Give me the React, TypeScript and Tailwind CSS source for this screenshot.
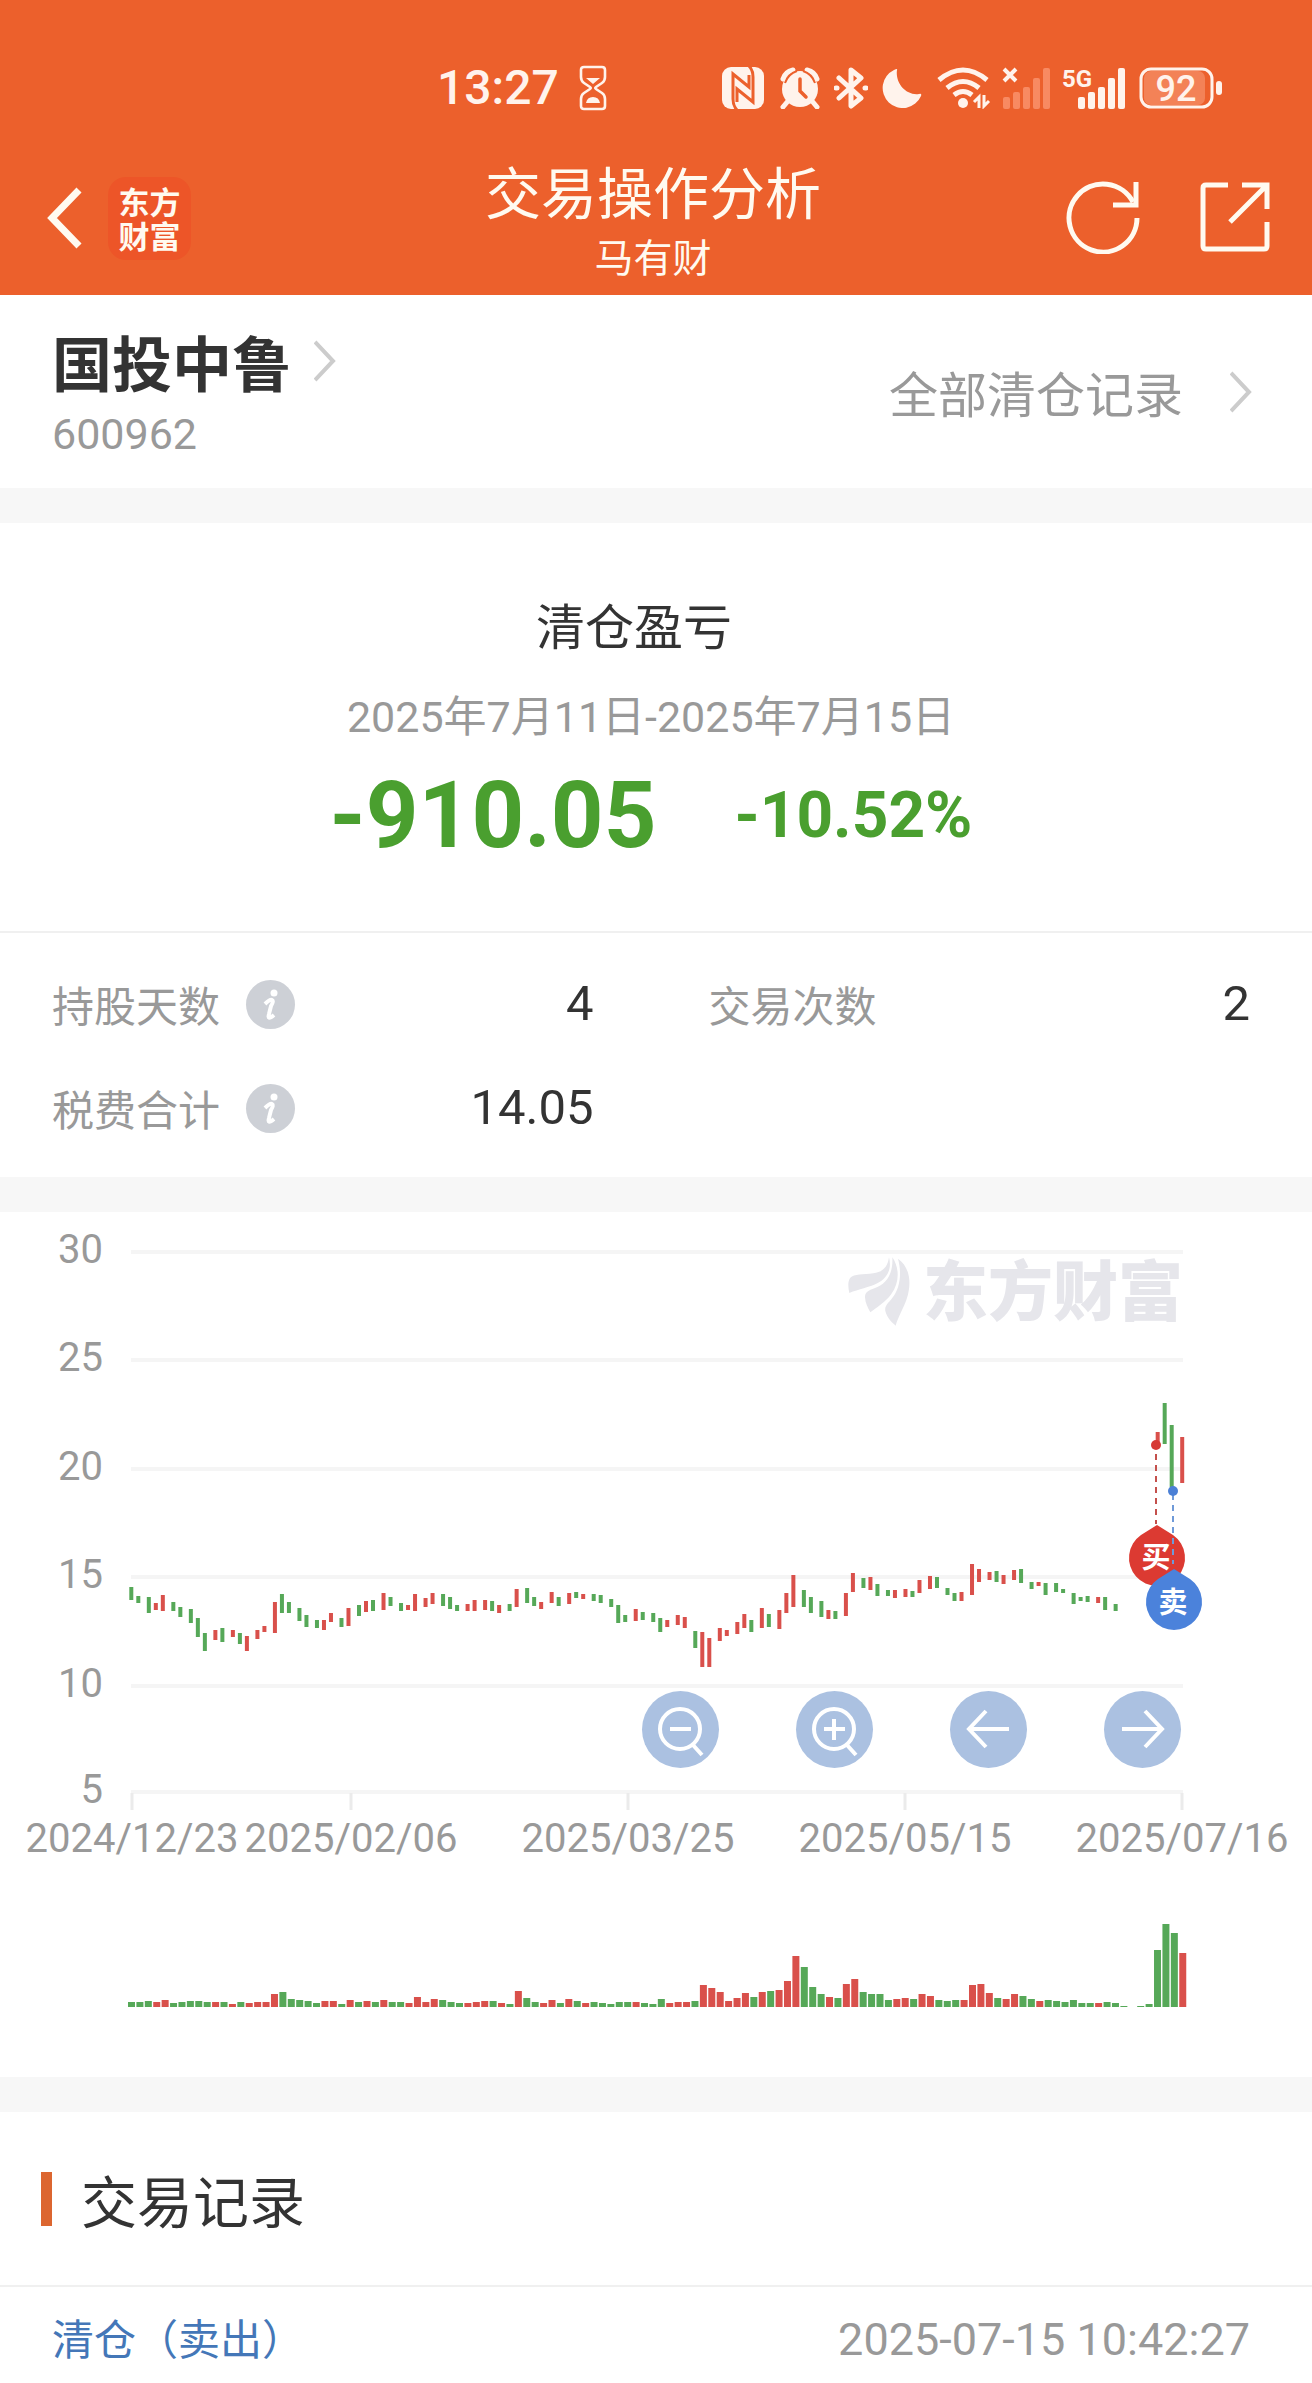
import type { ReactNode } from "react";

type Dir = "R" | "G";
type Candle = [Dir, number, number] | null;
type Volume = [Dir, number] | null;

const RED = "#d9504b";
const GREEN = "#56a858";

const GRID = [
  { label: "30", y: 40 },
  { label: "25", y: 148 },
  { label: "20", y: 257 },
  { label: "15", y: 365 },
  { label: "10", y: 474 },
  { label: "5", y: 580 },
];

const DATES = [
  { label: "2024/12/23", x: 132 },
  { label: "2025/02/06", x: 351 },
  { label: "2025/03/25", x: 628 },
  { label: "2025/05/15", x: 905 },
  { label: "2025/07/16", x: 1182 },
];

// direction, top, bottom
const CANDLES: Candle[] = [
  ["G", 375, 388], ["G", 384, 391], ["G", 385, 401], ["R", 391, 398], ["R", 383, 399],
  ["G", 390, 399], ["G", 395, 405], ["G", 397, 411], ["G", 406, 425], ["G", 421, 439],
  ["R", 418, 428], ["G", 416, 430], ["R", 418, 425], ["G", 421, 432], ["R", 424, 439],
  ["R", 418, 427], ["R", 414, 420], ["R", 390, 421], ["G", 382, 401], ["G", 390, 401],
  ["G", 396, 409], ["G", 403, 415], ["G", 408, 416], ["R", 408, 418], ["R", 401, 410],
  ["G", 406, 415], ["R", 396, 414], ["G", 393, 404], ["R", 389, 400], ["G", 388, 399],
  ["R", 381, 398], ["G", 385, 394], ["G", 391, 399], ["R", 393, 398], ["R", 382, 399],
  ["R", 386, 395], ["R", 381, 392], ["G", 382, 394], ["G", 385, 397], ["G", 393, 399],
  ["R", 392, 399], ["R", 388, 399], ["R", 388, 398], ["G", 389, 399], ["R", 393, 401],
  ["G", 392, 399], ["R", 377, 395], ["G", 376, 391], ["G", 385, 394], ["R", 390, 397],
  ["R", 380, 391], ["G", 385, 394], ["R", 381, 392], ["G", 380, 386], ["R", 382, 387],
  ["G", 382, 389], ["G", 383, 391], ["G", 387, 395], ["G", 393, 411], ["G", 403, 410],
  ["R", 397, 409], ["G", 400, 408], ["G", 401, 410], ["G", 406, 420], ["R", 408, 415],
  ["R", 403, 413], ["R", 405, 416], ["G", 419, 436], ["R", 420, 455], ["R", 426, 455],
  ["R", 416, 429], ["R", 418, 424], ["R", 410, 422], ["R", 402, 416], ["G", 408, 420],
  ["R", 396, 416], ["G", 402, 415], ["R", 398, 417], ["R", 381, 401], ["R", 363, 395],
  ["G", 378, 395], ["G", 385, 401], ["G", 389, 405], ["R", 398, 407], ["G", 399, 407],
  ["R", 381, 404], ["R", 361, 380], ["G", 366, 376], ["R", 365, 378], ["G", 372, 384],
  ["G", 378, 384], ["R", 378, 386], ["R", 377, 385], ["G", 379, 385], ["R", 368, 381],
  ["R", 364, 377], ["G", 365, 376], ["G", 376, 383], ["G", 381, 389], ["R", 380, 389],
  ["R", 352, 383], ["R", 357, 370], ["R", 360, 368], ["G", 359, 370], ["R", 363, 372],
  ["R", 358, 368], ["G", 357, 371], ["G", 370, 377], ["R", 370, 374], ["G", 371, 383],
  ["G", 371, 380], ["G", 377, 381], ["G", 381, 392], ["G", 385, 389], ["G", 384, 390],
  ["R", 385, 391], ["G", 385, 398], ["G", 392, 399], null, null,
  null, null, ["R", 220, 230], ["G", 191, 232], ["G", 213, 275],
  ["R", 225, 271],
];

const VOLUMES: Volume[] = [
  ["G", 5], ["G", 5], ["G", 6], ["R", 5], ["R", 7], ["G", 4], ["G", 5], ["G", 6], ["G", 6], ["G", 5],
  ["R", 5], ["G", 5], ["R", 3], ["G", 5], ["R", 4], ["R", 5], ["R", 5], ["R", 13], ["G", 15], ["G", 8],
  ["G", 7], ["G", 6], ["G", 4], ["R", 6], ["R", 6], ["G", 3], ["R", 7], ["G", 5], ["R", 6], ["G", 5],
  ["R", 7], ["G", 5], ["G", 5], ["R", 4], ["R", 10], ["R", 5], ["R", 8], ["G", 7], ["G", 5], ["G", 4],
  ["R", 4], ["R", 5], ["R", 6], ["G", 6], ["R", 4], ["G", 3], ["R", 16], ["G", 9], ["G", 5], ["R", 4],
  ["R", 7], ["G", 4], ["R", 8], ["G", 6], ["R", 4], ["G", 5], ["G", 4], ["G", 3], ["G", 5], ["G", 5],
  ["R", 5], ["G", 4], ["G", 3], ["G", 8], ["R", 4], ["R", 5], ["R", 5], ["G", 6], ["R", 22], ["R", 19],
  ["R", 15], ["R", 6], ["R", 9], ["R", 14], ["G", 10], ["R", 15], ["G", 16], ["R", 17], ["R", 26], ["R", 51],
  ["G", 40], ["G", 20], ["G", 13], ["R", 10], ["G", 9], ["R", 23], ["R", 28], ["G", 15], ["G", 13], ["G", 13],
  ["G", 7], ["R", 8], ["R", 9], ["G", 8], ["R", 13], ["R", 11], ["G", 7], ["G", 6], ["G", 7], ["R", 7],
  ["R", 22], ["R", 23], ["R", 14], ["G", 9], ["R", 8], ["R", 13], ["G", 11], ["G", 8], ["R", 6], ["G", 7],
  ["G", 6], ["G", 5], ["G", 7], ["G", 4], ["G", 4], ["R", 4], ["G", 5], ["G", 4], ["G", 1], null,
  ["G", 1], ["G", 3], ["G", 57], ["G", 83], ["G", 74], ["R", 54],
];

const STATS = [
  { label: "持股天数", value: "4", info: true },
  { label: "交易次数", value: "2", info: false },
  { label: "税费合计", value: "14.05", info: true },
];

const NUM = "font-[Roboto,'Noto_Sans_CJK_SC',sans-serif]";

// Candles snap to a 3.5px raster, 12 steps for every 5 days
const candleX = (i: number) => 131.3 + Math.floor(i * 2.4 + 0.25) * 3.503;

function StatusBar() {
  return (
    <div className={`flex h-[52px] items-center pl-[437px] pr-[89px] text-[#fff3ec] ${NUM}`}>
      <span className="text-[48px] font-medium leading-[52px]">13:27</span>
      <svg className="ml-[20px]" width="28" height="46" viewBox="0 0 28 46" fill="none" stroke="currentColor" strokeWidth="2.6">
        <path d="M5 2h18q3 0 3 3v7q0 4-3 6l-6 4q-1.500 1 0 2l6 4q3 2 3 6v7q0 3-3 3H5q-3 0-3-3v-7q0-4 3-6l6-4q1.500-1 0-2l-6-4q-3-2-3-6V5q0-3 3-3z" />
        <path d="M7 13h14l-7 6zM7 38q1-6 7-6t7 6z" fill="currentColor" stroke="none" />
      </svg>
      <div className="ml-auto flex items-center">
        <svg width="42" height="42" viewBox="0 0 42 42" fill="none" stroke="#ec602c" strokeWidth="3">
          <rect width="42" height="42" rx="9" fill="currentColor" stroke="none" />
          <path d="M15 43Q11 39 11 32V7L27 20V8" />
          <path d="M27-1Q31 3 31 10V35L15 22V35" />
        </svg>
        <svg className="ml-[16px]" width="40" height="42" viewBox="0 0 40 42">
          <circle cx="20" cy="22" r="18" fill="currentColor" />
          <path d="M3 12Q5 5 13 3M37 12Q35 5 27 3M8 34l-5 6M32 34l5 6" stroke="currentColor" strokeWidth="5" fill="none" strokeLinecap="round" />
          <path d="M20 12v12l6 6" stroke="#ec602c" strokeWidth="3.500" fill="none" strokeLinecap="round" />
          <path d="M5 16Q8 7 17 4M35 16Q32 7 23 4" stroke="#ec602c" strokeWidth="2" fill="none" />
        </svg>
        <svg className="ml-[14px]" width="34" height="42" viewBox="0 0 34 42" fill="none" stroke="currentColor" strokeWidth="5" strokeLinejoin="round" strokeLinecap="round">
          <path d="M5 11l22 20-10 8V3l10 8L5 31" />
          <path d="M2 21h1M31 21h1" />
        </svg>
        <svg className="ml-[14px]" width="40" height="40" viewBox="0 0 40 40" fill="currentColor">
          <path d="M15 2C13 15 24 28 37 26q3-1 2 2A20 20 0 1 1 12 2q4-2 3 0z" />
        </svg>
        <svg className="ml-[15px]" width="54" height="42" viewBox="0 0 54 42" fill="none" stroke="currentColor" strokeWidth="5">
          <path d="M2 13Q26-7 50 13M10 21Q26 8 42 21M17 28Q26 21 35 28" />
          <circle cx="26" cy="36" r="5" fill="currentColor" stroke="none" />
          <path d="M37 35l5-5v11M47 28v11l5-5" strokeWidth="3" />
        </svg>
        <svg className="ml-[11px]" width="50" height="42" viewBox="0 0 50 42">
          <path d="M2 2l12 12M14 2L2 14" stroke="currentColor" strokeWidth="4" />
          <g fill="#f88a62">
            <rect x="1" y="30" width="7" height="12" rx="2" />
            <rect x="11" y="25" width="7" height="17" rx="2" />
            <rect x="21" y="20" width="7" height="22" rx="2" />
            <rect x="31" y="11" width="7" height="31" rx="2" />
            <rect x="41" y="1" width="7" height="41" rx="2" />
          </g>
        </svg>
        <svg className="ml-[10px] overflow-visible" width="64" height="42" viewBox="0 0 64 42" fill="currentColor">
          <text x="0" y="20" className="text-[24px] font-bold">5G</text>
          <rect x="16" y="30" width="7" height="12" rx="2" />
          <rect x="26" y="25" width="7" height="17" rx="2" />
          <rect x="36" y="20" width="7" height="22" rx="2" />
          <rect x="46" y="11" width="7" height="31" rx="2" />
          <rect x="56" y="1" width="7" height="41" rx="2" />
        </svg>
        <svg className="ml-[13px] overflow-visible" width="84" height="42" viewBox="0 0 84 42">
          <rect x="5" y="4" width="61" height="34" rx="7" fill="#f38257" />
          <rect x="2" y="2" width="71" height="38" rx="10" fill="none" stroke="currentColor" strokeWidth="3" />
          <rect x="77" y="14" width="6" height="14" rx="3" fill="currentColor" />
          <text x="37" y="34" textAnchor="middle" fill="currentColor" className="text-[36px] font-medium">92</text>
        </svg>
      </div>
    </div>
  );
}

function Header() {
  return (
    <header className="bg-[#ec602c] pt-[62px] pb-[8px] text-[#fffaf0]">
      <StatusBar />
      <div className="mt-[43px] grid grid-cols-[1fr_auto_1fr] items-start pl-[36px] pr-[42px]">
        <div className="flex h-[122px] items-center">
          <button type="button" aria-label="返回">
            <svg width="46" height="62" viewBox="0 0 46 62" fill="none" stroke="currentColor" strokeWidth="7">
              <path d="M43 3L16 31l27 28" />
            </svg>
          </button>
          <div className="ml-[26px] flex size-[83px] items-center justify-center rounded-[18px] bg-[#ed5528] text-[31px] font-bold leading-[34px]">
            <p className="text-center">东方<br />财富</p>
          </div>
        </div>
        <div className="flex flex-col items-center">
          <h1 className="text-[56px] leading-[66px]">交易操作分析</h1>
          <p className="text-[39px] leading-[64px]">马有财</p>
        </div>
        <div className="flex h-[120px] items-center justify-end gap-[60px]">
          <button type="button" aria-label="刷新">
            <svg width="74" height="74" viewBox="0 0 74 74" fill="none" stroke="currentColor" strokeWidth="5">
              <path d="M71 38A34 34 0 1 1 67 22" />
              <path d="M70 2v23H47" />
            </svg>
          </button>
          <button type="button" aria-label="分享">
            <svg width="70" height="70" viewBox="0 0 70 70" fill="none" stroke="currentColor" strokeWidth="5">
              <path d="M28 3H6q-3 0-3 3v58q0 3 3 3h58q3 0 3-3V40" />
              <path d="M42 3h25v24M66 4L30 40" />
            </svg>
          </button>
        </div>
      </div>
    </header>
  );
}

function Chevron() {
  return (
    <svg width="22" height="42" viewBox="0 0 22 42" fill="none" stroke="#cccccc" strokeWidth="4">
      <path d="M1 2l18 19L1 40" />
    </svg>
  );
}

function InfoButton({ label }: { label: string }) {
  return (
    <button
      type="button"
      aria-label={`${label}说明`}
      className="ml-[26px] flex size-[49px] items-center justify-center rounded-full bg-[#cdd0d6]"
    >
      <svg width="49" height="49" viewBox="0 0 49 49" fill="none" stroke="#fff">
        <circle cx="28" cy="13" r="3.500" fill="#fff" stroke="none" />
        <path d="M19 24q5-5 7-4t-1 6l-2 8q-2 7 5 1" strokeWidth="4" />
      </svg>
    </button>
  );
}

function Band() {
  return <div className="h-[35px] bg-[#f7f7f7]" />;
}

function ToolButton({ label, children }: { label: string; children: ReactNode }) {
  return (
    <button type="button" aria-label={label} className="size-[77px] rounded-full bg-[#abc1e1]">
      <svg width="77" height="77" viewBox="0 0 77 77" fill="none" stroke="#fff" strokeWidth="4">
        {children}
      </svg>
    </button>
  );
}

function Chart() {
  return (
    <section className="relative">
      <svg className="block w-full" viewBox="0 0 1312 865">
        <g stroke="#f5f5f5" strokeWidth="4">
          {GRID.map((g) => (
            <line key={g.label} x1="131" x2="1183" y1={g.y} y2={g.y} />
          ))}
        </g>
        <g fill="#999999" className={`text-[40px] ${NUM}`}>
          {GRID.map((g) => (
            <text key={g.label} x="103" y={g.y + 11} textAnchor="end">{g.label}</text>
          ))}
          {DATES.map((d) => (
            <text key={d.label} x={d.x} y="640" textAnchor="middle">{d.label}</text>
          ))}
        </g>
        {DATES.map((d) => (
          <line key={d.label} x1={d.x} x2={d.x} y1="581" y2="598" stroke="#ebebeb" strokeWidth="3" />
        ))}

        {/* Watermark */}
        <g fill="#e6e6eb">
          <path
            transform="translate(820 -2) scale(0.3333)"
            d="M207 142C203 172 188 186 160 190C130 194 102 192 91 203C83 212 84 232 88 249C116 238 148 232 172 220C203 204 216 176 207 142ZM217 142C220 190 200 222 165 234C144 242 135 246 135 262C136 280 143 292 151 307C170 292 197 276 214 252C240 216 238 172 217 142ZM234 146C246 190 241 236 214 268C200 284 194 290 196 303C201 324 216 337 227 347C232 326 250 296 260 267C277 216 268 170 234 146Z"
          />
          <text x="1053" y="103" textAnchor="middle" className="text-[65px] font-black">东方财富</text>
        </g>

        {CANDLES.map((c, i) =>
          c && <rect key={i} x={candleX(i) - 2} y={c[1]} width="4" height={c[2] - c[1]} fill={c[0] === "R" ? RED : GREEN} />
        )}
        {VOLUMES.map((v, i) =>
          v && <rect key={i} x={128 + i * 8.41} y={795 - v[1]} width="7" height={v[1]} fill={v[0] === "R" ? RED : GREEN} />
        )}

        {/* Buy and sell points */}
        <path d="M1157 313l16 10a28 28 0 1 1-32 0z" fill="#dc3a32" />
        <line x1="1156" x2="1156" y1="242" y2="312" stroke="#c4504c" strokeWidth="2" strokeDasharray="6 5" />
        <circle cx="1156" cy="233" r="5" fill="#d63a35" />
        <text x="1156" y="356" textAnchor="middle" fill="#fff" className="text-[29px] font-bold">买</text>
        <line x1="1173" x2="1173" y1="282" y2="352" stroke="#6f9ad8" strokeWidth="2" strokeDasharray="6 5" />
        <circle cx="1173" cy="279" r="5" fill="#4b80d6" />
        <path d="M1174 357l16 10a28 28 0 1 1-32 0z" fill="#4b82db" />
        <text x="1173" y="401" textAnchor="middle" fill="#fff" className="text-[29px] font-bold">卖</text>
      </svg>

      <div className="absolute right-[131px] top-[479px] flex gap-[77px]">
        <ToolButton label="缩小">
          <circle cx="38" cy="38" r="20" />
          <path d="M28 38h21M51 54l9 10" />
        </ToolButton>
        <ToolButton label="放大">
          <circle cx="38" cy="38" r="20" />
          <path d="M28 38h21M38 28v21M51 54l9 10" />
        </ToolButton>
        <ToolButton label="左移">
          <path d="M59 38H19M36 20L19 38l17 18" />
        </ToolButton>
        <ToolButton label="右移">
          <path d="M18 38h40M41 20l17 18-17 18" />
        </ToolButton>
      </div>
    </section>
  );
}

export default function App() {
  return (
    <div className="min-h-screen bg-white font-['Noto_Sans_CJK_SC',sans-serif] text-[#333333]">
      <Header />

      <section className="flex items-center justify-between pl-[52px] pr-[60px]">
        <div className="pb-[16px] pt-[30px]">
          <a href="#stock" className="flex items-center gap-[22px]">
            <h2 className="text-[60px] font-bold leading-[72px]">国投中鲁</h2>
            <Chevron />
          </a>
          <p className={`text-[43px] leading-[75px] text-[#999999] ${NUM}`}>600962</p>
        </div>
        <a href="#history" className="flex items-center gap-[47px] text-[49px] leading-[72px] text-[#999999]">
          全部清仓记录
          <Chevron />
        </a>
      </section>

      <Band />

      <section className="flex flex-col items-center pb-[69px] pr-[10px] pt-[61px]">
        <h2 className="pr-[34px] text-[49px] leading-[80px]">清仓盈亏</h2>
        <p className={`text-[43px] leading-[106px] text-[#999999] ${NUM}`}>2025年7月11日-2025年7月15日</p>
        <p className={`flex items-center gap-[78px] font-bold leading-[92px] text-[#4a9f2f] ${NUM}`}>
          <span className="text-[92px]">-910.05</span>
          <span className="text-[64px]">-10.52%</span>
        </p>
      </section>

      <dl className="grid grid-cols-2 gap-x-[115px] border-t-2 border-[#f0f0f0] pb-[17px] pl-[52px] pr-[62px] pt-[19px]">
        {STATS.map((s) => (
          <div key={s.label} className="flex items-center justify-between leading-[104px]">
            <dt className="flex items-center text-[42px] text-[#999999]">
              {s.label}
              {s.info && <InfoButton label={s.label} />}
            </dt>
            <dd className={`text-[49px] ${NUM}`}>{s.value}</dd>
          </div>
        ))}
      </dl>

      <Band />
      <Chart />
      <Band />

      <section>
        <div className="flex items-center gap-[29px] border-b-2 border-[#f0f0f0] pl-[41px]">
          <span className="h-[54px] w-[11px] bg-[#dc6630]" />
          <h2 className="text-[56px] leading-[173px]">交易记录</h2>
        </div>
        <div className="flex items-baseline justify-between pl-[52px] pr-[62px] pt-[6px] leading-[88px]">
          <span className="text-[42px] text-[#4477b8]">清仓（卖出）</span>
          <time className={`text-[45px] text-[#999999] ${NUM}`}>2025-07-15 10:42:27</time>
        </div>
      </section>
    </div>
  );
}
